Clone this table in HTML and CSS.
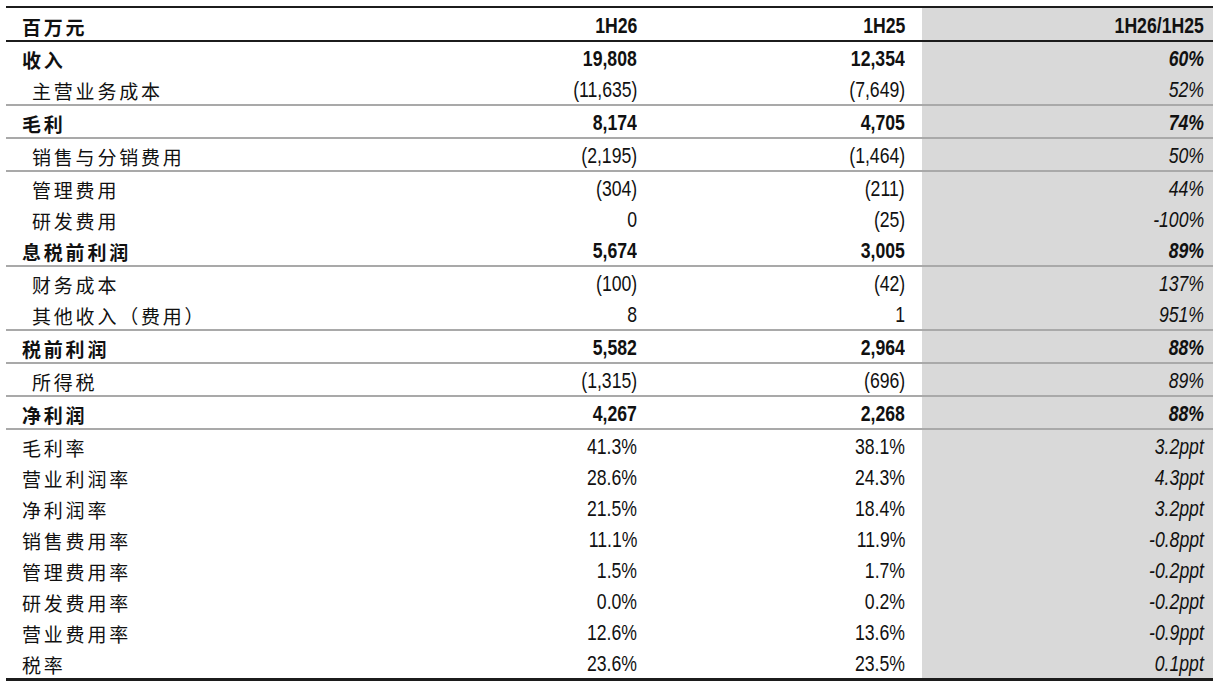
FILE: index.html
```html
<!DOCTYPE html>
<html lang="zh-CN">
<head>
<meta charset="utf-8">
<title>损益表</title>
<link rel="stylesheet" href="styles.css">
</head>
<body>
<div class="sheet">
  <div class="row head">
    <div class="c label b">百万元</div>
    <div class="c num b"><span>1H26</span></div>
    <div class="c num b"><span>1H25</span></div>
    <div class="c pct b up"><span>1H26/1H25</span></div>
  </div>
  <div class="row">
    <div class="c label b">收入</div>
    <div class="c num b"><span>19,808</span></div>
    <div class="c num b"><span>12,354</span></div>
    <div class="c pct b"><span>60%</span></div>
  </div>
  <div class="row">
    <div class="c label sub">主营业务成本</div>
    <div class="c num"><span>(11,635)</span></div>
    <div class="c num"><span>(7,649)</span></div>
    <div class="c pct"><span>52%</span></div>
  </div>
  <div class="row rule">
    <div class="c label b">毛利</div>
    <div class="c num b"><span>8,174</span></div>
    <div class="c num b"><span>4,705</span></div>
    <div class="c pct b"><span>74%</span></div>
  </div>
  <div class="row rule">
    <div class="c label sub">销售与分销费用</div>
    <div class="c num"><span>(2,195)</span></div>
    <div class="c num"><span>(1,464)</span></div>
    <div class="c pct"><span>50%</span></div>
  </div>
  <div class="row rule">
    <div class="c label sub">管理费用</div>
    <div class="c num"><span>(304)</span></div>
    <div class="c num"><span>(211)</span></div>
    <div class="c pct"><span>44%</span></div>
  </div>
  <div class="row">
    <div class="c label sub">研发费用</div>
    <div class="c num"><span>0</span></div>
    <div class="c num"><span>(25)</span></div>
    <div class="c pct"><span>-100%</span></div>
  </div>
  <div class="row">
    <div class="c label b">息税前利润</div>
    <div class="c num b"><span>5,674</span></div>
    <div class="c num b"><span>3,005</span></div>
    <div class="c pct b"><span>89%</span></div>
  </div>
  <div class="row rule">
    <div class="c label sub">财务成本</div>
    <div class="c num"><span>(100)</span></div>
    <div class="c num"><span>(42)</span></div>
    <div class="c pct"><span>137%</span></div>
  </div>
  <div class="row">
    <div class="c label sub">其他收入（费用）</div>
    <div class="c num"><span>8</span></div>
    <div class="c num"><span>1</span></div>
    <div class="c pct"><span>951%</span></div>
  </div>
  <div class="row rule">
    <div class="c label b">税前利润</div>
    <div class="c num b"><span>5,582</span></div>
    <div class="c num b"><span>2,964</span></div>
    <div class="c pct b"><span>88%</span></div>
  </div>
  <div class="row rule">
    <div class="c label sub">所得税</div>
    <div class="c num"><span>(1,315)</span></div>
    <div class="c num"><span>(696)</span></div>
    <div class="c pct"><span>89%</span></div>
  </div>
  <div class="row rule">
    <div class="c label b">净利润</div>
    <div class="c num b"><span>4,267</span></div>
    <div class="c num b"><span>2,268</span></div>
    <div class="c pct b"><span>88%</span></div>
  </div>
  <div class="row rule">
    <div class="c label">毛利率</div>
    <div class="c num"><span>41.3%</span></div>
    <div class="c num"><span>38.1%</span></div>
    <div class="c pct"><span>3.2ppt</span></div>
  </div>
  <div class="row">
    <div class="c label">营业利润率</div>
    <div class="c num"><span>28.6%</span></div>
    <div class="c num"><span>24.3%</span></div>
    <div class="c pct"><span>4.3ppt</span></div>
  </div>
  <div class="row">
    <div class="c label">净利润率</div>
    <div class="c num"><span>21.5%</span></div>
    <div class="c num"><span>18.4%</span></div>
    <div class="c pct"><span>3.2ppt</span></div>
  </div>
  <div class="row">
    <div class="c label">销售费用率</div>
    <div class="c num"><span>11.1%</span></div>
    <div class="c num"><span>11.9%</span></div>
    <div class="c pct"><span>-0.8ppt</span></div>
  </div>
  <div class="row">
    <div class="c label">管理费用率</div>
    <div class="c num"><span>1.5%</span></div>
    <div class="c num"><span>1.7%</span></div>
    <div class="c pct"><span>-0.2ppt</span></div>
  </div>
  <div class="row">
    <div class="c label">研发费用率</div>
    <div class="c num"><span>0.0%</span></div>
    <div class="c num"><span>0.2%</span></div>
    <div class="c pct"><span>-0.2ppt</span></div>
  </div>
  <div class="row">
    <div class="c label">营业费用率</div>
    <div class="c num"><span>12.6%</span></div>
    <div class="c num"><span>13.6%</span></div>
    <div class="c pct"><span>-0.9ppt</span></div>
  </div>
  <div class="row last">
    <div class="c label">税率</div>
    <div class="c num"><span>23.6%</span></div>
    <div class="c num"><span>23.5%</span></div>
    <div class="c pct"><span>0.1ppt</span></div>
  </div>
</div>
</body>
</html>
```

FILE: styles.css
```css
html, body {
  margin: 0;
  padding: 0;
  background: #ffffff;
}

.sheet {
  margin: 6px 0 0 6px;
  width: 1207px;
  border-top: 2px solid #1c1c1c;
  color: #111111;
}

.row {
  display: grid;
  grid-template-columns: 390px 258px 268px 291px;
  height: 31px;
}

.row.head {
  height: 32px;
  border-bottom: 2px solid #1c1c1c;
}

.row.rule {
  border-top: 2px solid #a9a9a9;
}

.row.last {
  border-bottom: 3px solid #1c1c1c;
}

.c {
  display: flex;
  align-items: center;
  padding-top: 3px;
  box-sizing: border-box;
  white-space: nowrap;
}

.head .c {
  padding-top: 4px;
}

.label {
  padding-left: 16px;
  font-family: "Noto Sans CJK SC", "Noto Sans CJK TC", sans-serif;
  font-size: 19px;
  letter-spacing: 2.8px;
  font-weight: 400;
}

.label.sub {
  padding-left: 26px;
}

.num, .pct {
  justify-content: flex-end;
  font-family: "Liberation Sans", Arial, sans-serif;
  font-size: 21.5px;
}

.num span, .pct span {
  display: inline-block;
  transform: scaleX(0.82);
  transform-origin: right center;
}

.num {
  padding-right: 17px;
}

.pct {
  padding-right: 9px;
  background: #d9d9d9;
  font-style: italic;
}

.pct.up {
  font-style: normal;
}

.b {
  font-weight: 700;
}
```
